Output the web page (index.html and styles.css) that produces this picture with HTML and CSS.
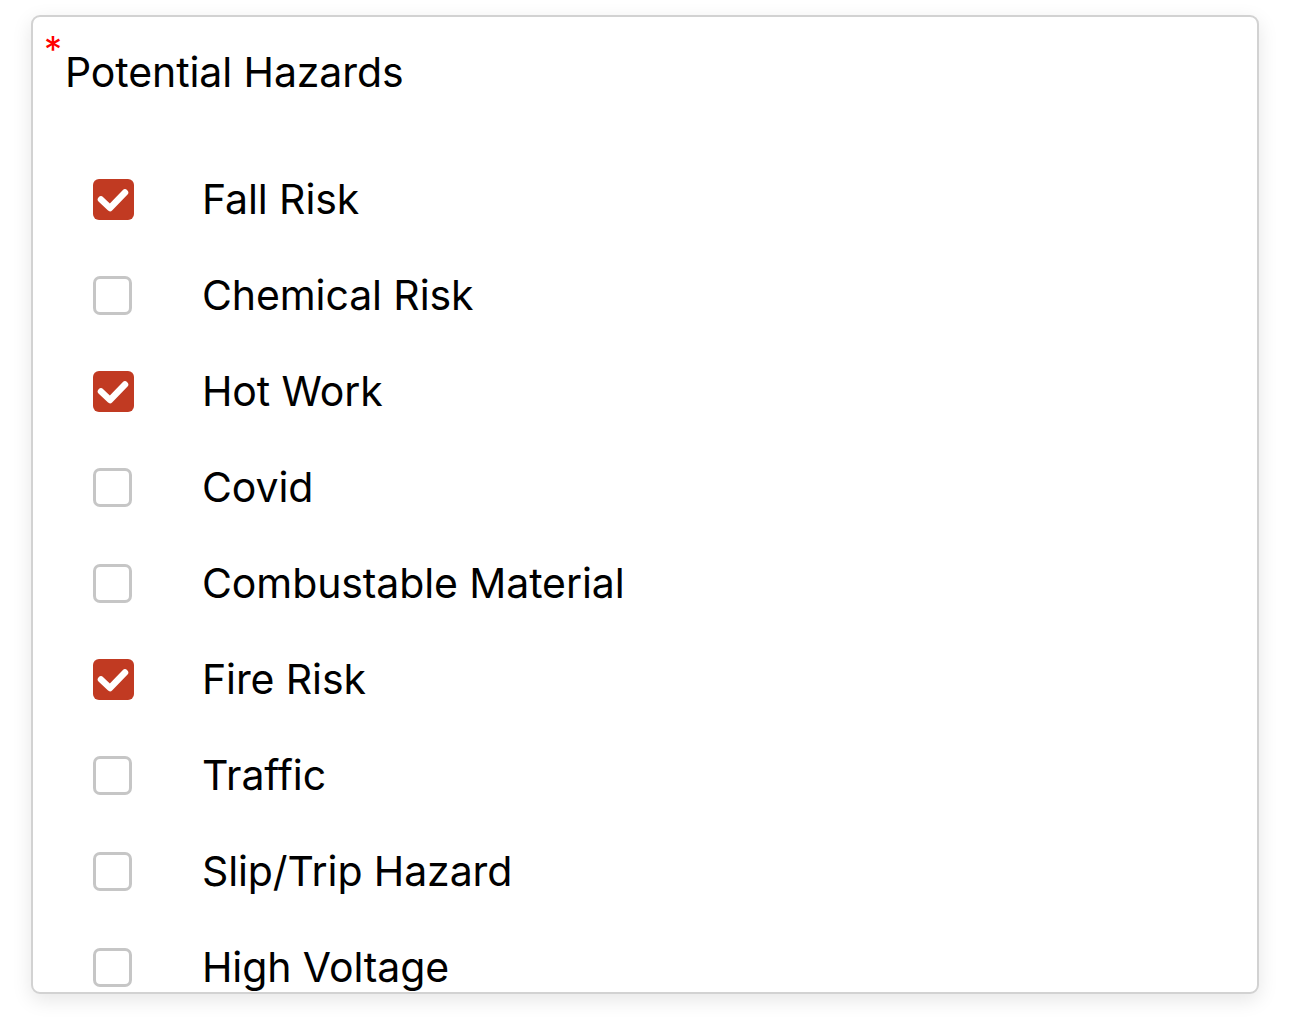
FILE: index.html
```html
<!DOCTYPE html>
<html lang="en">
<head>
  <meta charset="UTF-8" />
  <title>Potential Hazards</title>
  <link rel="stylesheet" href="styles.css">
</head>
<body>
  <div class="tarjeta">
    <div class="titulo"><span class="req">*</span><span class="texto">Potential Hazards</span></div>

    <ul class="lista">
      <li><span class="caja marcada"><svg viewBox="0 0 41 41"><path d="M8 20.5 L17 29 L32 13.5" /></svg></span>Fall Risk</li>
      <li><span class="caja"></span>Chemical Risk</li>
      <li><span class="caja marcada"><svg viewBox="0 0 41 41"><path d="M8 20.5 L17 29 L32 13.5" /></svg></span>Hot Work</li>
      <li><span class="caja"></span>Covid</li>
      <li><span class="caja"></span>Combustable Material</li>
      <li><span class="caja marcada"><svg viewBox="0 0 41 41"><path d="M8 20.5 L17 29 L32 13.5" /></svg></span>Fire Risk</li>
      <li><span class="caja"></span>Traffic</li>
      <li><span class="caja"></span>Slip/Trip Hazard</li>
      <li><span class="caja"></span>High Voltage</li>
    </ul>
  </div>
</body>
</html>
```

FILE: styles.css
```css
* {
  box-sizing: border-box;
  margin: 0;
  padding: 0;
}

body {
  background-color: #ffffff;
  color: #000000;
  font-family: 'Inter', 'Roboto', sans-serif;
  padding: 15px 31px 0 31px;
  height: 1018px;
  overflow: hidden;
}

.tarjeta {
  height: 979px;
  border: 2px solid #d2d2d2;
  border-radius: 9px;
  box-shadow: 0 6px 20px rgba(0, 0, 0, 0.1);
  padding: 16px 0 0 11px;
  overflow: hidden;
  background-color: #fff;
}

.titulo {
  display: flex;
  align-items: flex-start;
  font-size: 41px;
  line-height: 48px;
  height: 118px;
}

.texto {
  margin-top: 15px;
  letter-spacing: -0.1px;
}

.req {
  color: #ff0000;
  font-size: 36px;
  line-height: 32px;
  width: 21px;
}

.lista {
  list-style: none;
}

.lista li {
  display: flex;
  align-items: center;
  height: 96px;
  padding-left: 49px;
  font-size: 41px;
  letter-spacing: -0.1px;
}

.caja {
  width: 39px;
  height: 39px;
  border: 3px solid #c6c6c6;
  border-radius: 7px;
  margin-right: 70px;
  flex-shrink: 0;
}

.caja.marcada {
  width: 41px;
  height: 41px;
  margin-right: 68px;
  border: none;
  background-color: #c13a22;
  border-radius: 6px;
}

.caja svg {
  display: block;
  width: 41px;
  height: 41px;
}

.caja path {
  fill: none;
  stroke: #ffffff;
  stroke-width: 6.5;
  stroke-linecap: round;
  stroke-linejoin: round;
}
```
